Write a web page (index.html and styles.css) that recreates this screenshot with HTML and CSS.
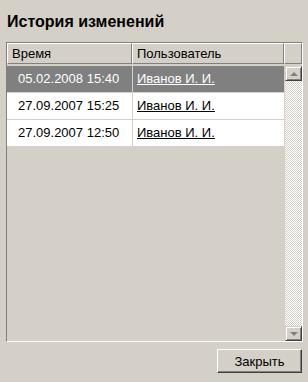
FILE: index.html
```html
<!DOCTYPE html>
<html lang="ru">
<head>
    <meta charset="UTF-8">
    <title>История изменений</title>
    <link rel="stylesheet" href="styles.css">
</head>
<body>
    <h1 class="title">История изменений</h1>

    <div class="list">
        <div class="list-head">
            <div class="col col-time">Время</div>
            <div class="col col-user">Пользователь</div>
            <div class="col col-pad"></div>
        </div>
        <div class="list-body">
            <div class="rows">
                <div class="row selected">
                    <div class="cell cell-time">05.02.2008 15:40</div>
                    <div class="cell cell-user"><a href="#">Иванов И. И.</a></div>
                </div>
                <div class="row">
                    <div class="cell cell-time">27.09.2007 15:25</div>
                    <div class="cell cell-user"><a href="#">Иванов И. И.</a></div>
                </div>
                <div class="row">
                    <div class="cell cell-time">27.09.2007 12:50</div>
                    <div class="cell cell-user"><a href="#">Иванов И. И.</a></div>
                </div>
            </div>
            <div class="scrollbar">
                <div class="sb-btn"><span class="arrow up"></span></div>
                <div class="sb-track"></div>
                <div class="sb-btn"><span class="arrow down"></span></div>
            </div>
        </div>
    </div>

    <div class="actions">
        <button class="btn" type="button">Закрыть</button>
    </div>
</body>
</html>
```

FILE: styles.css
```css
body { margin: 0; background: #d4d0c8; font-family: "Liberation Sans", Arial, sans-serif; font-size: 13px; color: #000; }
.title { margin: 0; padding: 12px 7px 0; font-size: 16px; line-height: 19px; font-weight: bold; }

.list { margin: 11px 0 0 6px; width: 295px; height: 298px; border: 1px solid; border-color: #808080 #fff #fff #808080; display: flex; flex-direction: column; }
.list-head { display: flex; height: 21px; }
.col { box-sizing: border-box; border: 1px solid; border-color: #fff #808080 #808080 #fff; padding-left: 4px; line-height: 19px; white-space: nowrap; }
.col-time { width: 125px; }
.col-user { width: 152px; }
.col-pad { flex: 1; }

.list-body { flex: 1; display: flex; padding-top: 2px; min-height: 0; }
.rows { flex: 1; padding-right: 1px; }
.row { display: flex; height: 26px; margin-bottom: 1px; }
.cell { background: #fff; line-height: 26px; white-space: nowrap; }
.cell-time { width: 125px; padding-left: 11px; box-sizing: border-box; margin-right: 1px; }
.cell-user { flex: 1; padding-left: 4px; }
.cell a { color: #000; text-decoration: underline; }
.row.selected .cell { background: #808080; color: #fff; }
.row.selected .cell a { color: #fff; }

.scrollbar { width: 17px; display: flex; flex-direction: column; }
.sb-btn { box-sizing: border-box; height: 15px; background: #d4d0c8; border: 1px solid; border-color: #d4d0c8 #404040 #404040 #d4d0c8; box-shadow: inset 1px 1px 0 #fff, inset -1px -1px 0 #808080; display: flex; align-items: center; justify-content: center; }
.sb-track { flex: 1; background: repeating-conic-gradient(#fff 0 25%, #d4d0c8 0 50%) 0 0 / 2px 2px; }
.arrow { width: 0; height: 0; border-left: 4px solid transparent; border-right: 4px solid transparent; }
.arrow.up { border-bottom: 4px solid #808080; }
.arrow.down { border-top: 4px solid #808080; }

.actions { display: flex; justify-content: flex-end; padding: 7px 6px 0 0; }
.btn { width: 85px; height: 24px; padding: 0; font-family: inherit; font-size: 13px; color: #000; background: #d4d0c8; border: 1px solid; border-color: #fff #404040 #404040 #fff; box-shadow: inset -1px -1px 0 #808080; }
```
